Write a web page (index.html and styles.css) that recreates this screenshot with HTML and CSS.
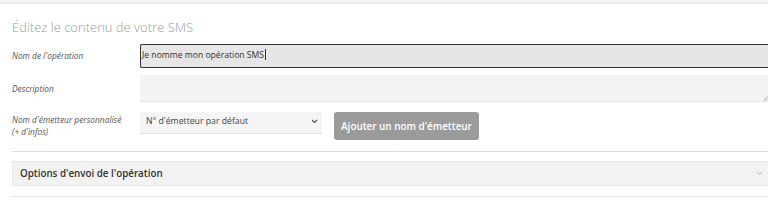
FILE: index.html
```html
<!DOCTYPE html>
<html lang="fr">
<head>
<meta charset="utf-8">
<link rel="stylesheet" href="styles.css">
</head>
<body>
<div class="topbar"></div>
<div class="page">
  <h2 class="title">Éditez le contenu de votre SMS</h2>
  <div class="form">
    <label class="lbl lbl-mid">Nom de l'opération</label>
    <div class="field"><div class="input">Je nomme mon opération SMS<span class="caret"></span></div></div>

    <label class="lbl lbl-mid">Description</label>
    <div class="field"><div class="textarea"><svg class="grip" width="5" height="5" viewBox="0 0 5 5"><path d="M4.5 0.5 L0.5 4.5 M4.5 2.5 L2.5 4.5" stroke="#aaa" stroke-width="0.8"/></svg></div></div>

    <label class="lbl lbl-top">Nom d'émetteur personnalisé<br>(+ d'infos)</label>
    <div class="field row">
      <div class="select"><span>N° d'émetteur par défaut</span>
        <svg width="7" height="5" viewBox="0 0 7 5"><path d="M1 1 L3.5 3.5 L6 1" fill="none" stroke="#555" stroke-width="1.2"/></svg>
      </div>
      <button class="btn">Ajouter un nom d'émetteur</button>
    </div>
  </div>
  <hr class="sep">
  <div class="accordion">
    <span>Options d'envoi de l'opération</span>
    <svg width="7" height="5" viewBox="0 0 7 5"><path d="M1 1 L3.5 3.5 L6 1" fill="none" stroke="#aaa" stroke-width="1"/></svg>
  </div>
  <hr class="sep sep2">
</div>
</body>
</html>
```
FILE: styles.css
```css
html, body { margin: 0; padding: 0; background: #fff; overflow: hidden; }
body { font-family: "Open Sans", "Liberation Sans", sans-serif; color: #333; width: 768px; }
.topbar { height: 3px; background: #f3f3f3; border-bottom: 1px solid #e9e9e9; }
.page { padding-left: 12px; width: 770px; }
.title { margin: 0; padding-top: 14px; font-size: 13px; font-weight: 300; color: #9c9c9c; line-height: 18px; height: 26px; }
.form { display: grid; grid-template-columns: 128px 630px; row-gap: 7px; }
.lbl { font-style: italic; font-size: 8.4px; color: #555; line-height: 12px; }
.lbl-mid { align-self: center; }
.lbl-top { padding-top: 5px; }
.input { box-sizing: border-box; height: 24px; background: #e6e6e6; border: 1px solid #333; border-right: none; border-radius: 2px 0 0 2px; font-size: 8.6px; line-height: 21px; padding-left: 1px; color: #333; }
.caret { display: inline-block; width: 1px; height: 11px; background: #333; vertical-align: -2px; margin-left: 1px; }
.textarea { position: relative; box-sizing: border-box; height: 27px; width: 628px; background: #f3f3f3; border-bottom: 1px dotted #d8d8d8; }
.grip { position: absolute; right: 0; bottom: 0; }
.row { display: flex; align-items: flex-start; gap: 12px; padding-top: 3px; }
.select { box-sizing: border-box; width: 182px; height: 22px; background: #f5f5f5; border-bottom: 1px solid #e0e0e0; display: flex; align-items: center; justify-content: space-between; padding: 0 4px 3px 6px; font-size: 8.7px; color: #444; }
.btn { box-sizing: border-box; width: 145px; height: 28px; background: #9b9b9b; border: none; border-radius: 3px; color: #fff; font-family: inherit; font-size: 9.9px; font-weight: 600; padding: 0; }
.sep { margin: 11px 0 0; border: none; border-top: 1px solid #dcdcdc; }
.accordion { margin-top: 9px; box-sizing: border-box; height: 25px; background: #f2f2f2; border: 1px solid #e6e6e6; display: flex; align-items: center; justify-content: space-between; padding: 0 8px 0 7px; font-size: 9.8px; font-weight: 600; color: #333; }
.accordion svg { margin-right: 10px; }
.sep2 { margin-top: 10px; border-top-color: #e6e6e6; }
```
